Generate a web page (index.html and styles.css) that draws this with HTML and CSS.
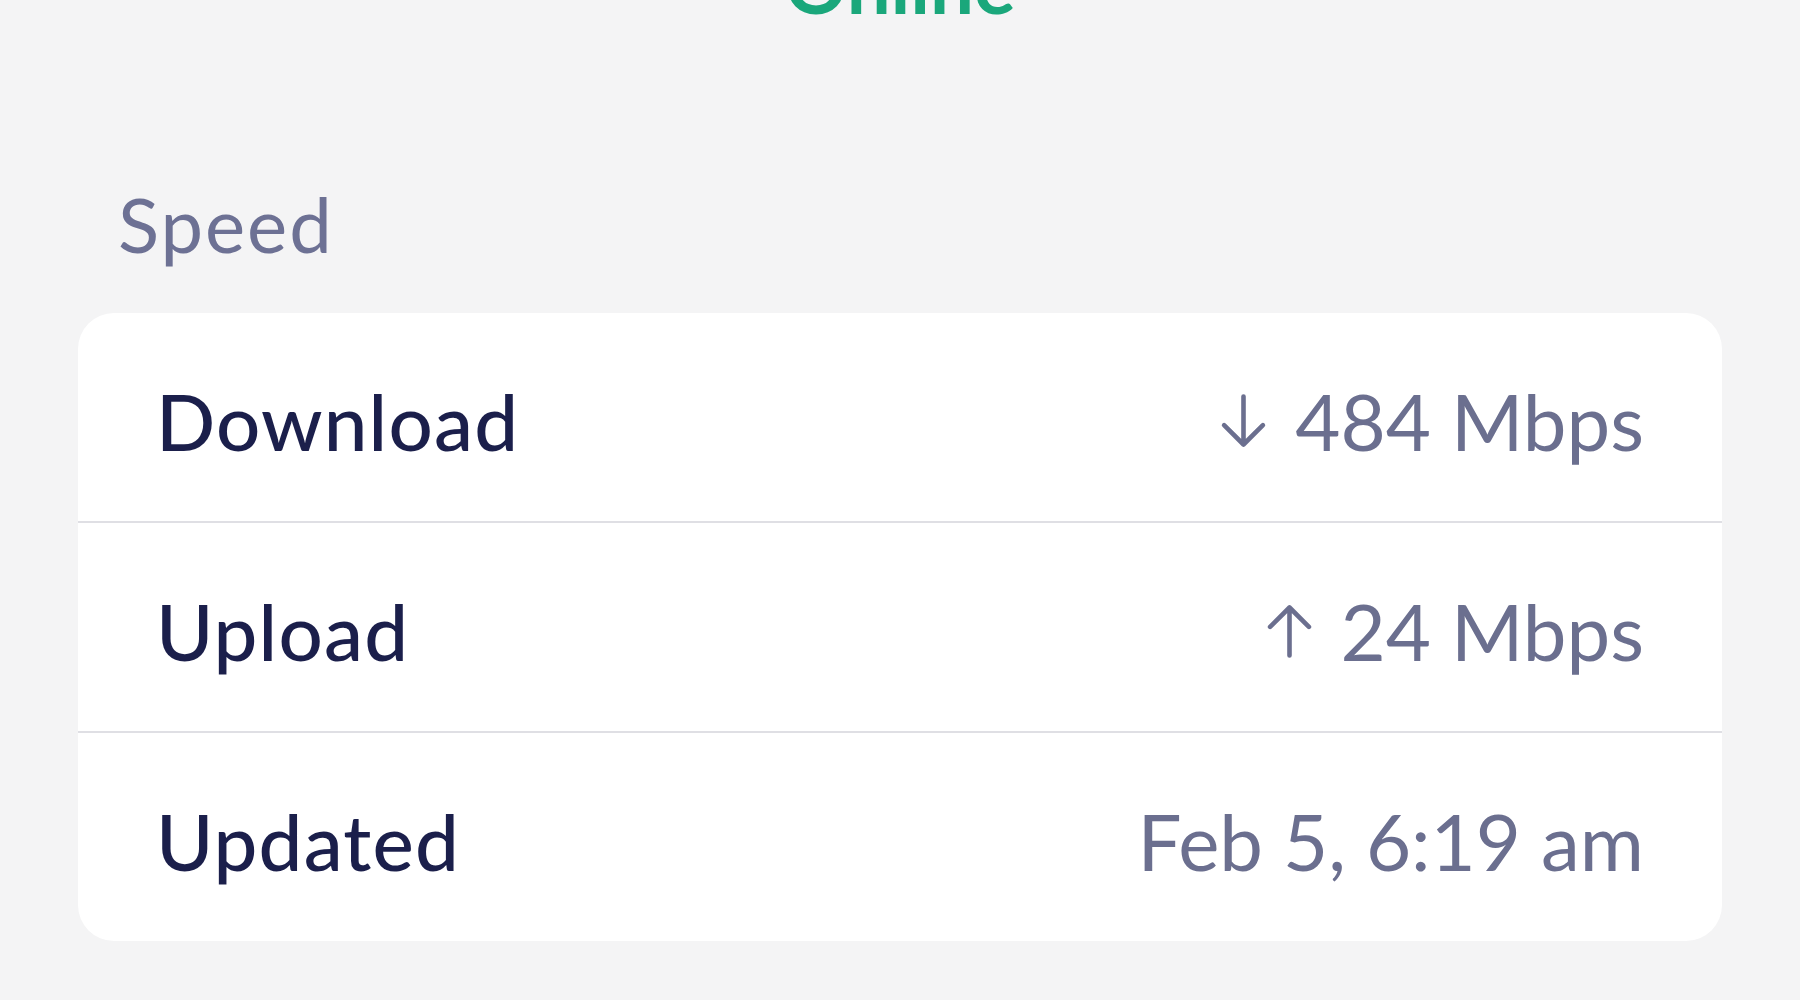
FILE: index.html
```html
<html>
    <head>
        <title>Speed</title>
        <link rel="stylesheet" href="styles.css">
    </head>
    <body>
        <div class="status">Online</div>

        <section class="group">
            <h2 class="group-title">Speed</h2>
            <ul class="card">
                <li class="row">
                    <span class="label">Download</span>
                    <span class="value">
                        <svg class="arrow" viewBox="0 0 46 54"><path d="M23 3 V50 M4 31 L23 50 L42 31"/></svg>
                        484 Mbps
                    </span>
                </li>
                <li class="row">
                    <span class="label">Upload</span>
                    <span class="value">
                        <svg class="arrow" viewBox="0 0 46 54"><path d="M23 51 V4 M4 23 L23 4 L42 23"/></svg>
                        24 Mbps
                    </span>
                </li>
                <li class="row">
                    <span class="label">Updated</span>
                    <span class="value">Feb 5, 6:19 am</span>
                </li>
            </ul>
        </section>
    </body>
</html>
```

FILE: styles.css
```css
*{
    margin:0;
    padding:0;
    box-sizing:border-box;
}
ul,li{
    list-style:none;
}
body{
    background:#f4f4f5;
    font-family:Lato, "Noto Sans", sans-serif;
    height:1000px;
    overflow:hidden;
}
.status{
    margin-top:-55px;
    text-align:center;
    font-size:78px;
    line-height:78px;
    font-weight:700;
    color:#1aa77b;
}
.group{
    padding:0 78px;
}
.group-title{
    margin-top:156px;
    padding-left:40px;
    font-size:76px;
    line-height:90px;
    font-weight:400;
    letter-spacing:2px;
    color:#6d7194;
}
.card{
    margin-top:44px;
    background:#fff;
    border-radius:36px;
    overflow:hidden;
}
.row{
    display:flex;
    align-items:center;
    justify-content:space-between;
    height:210px;
    padding:8px 78px 0 78px;
    border-bottom:2px solid #dfdfe4;
}
.row:last-child{
    height:208px;
    border-bottom:none;
}
.label{
    font-size:78px;
    font-weight:500;
    letter-spacing:1.2px;
    color:#1b1f4b;
}
.value{
    display:flex;
    align-items:center;
    gap:28px;
    font-size:78px;
    color:#6b6f8f;
}
.arrow{
    width:47px;
    height:56px;
    fill:none;
    stroke:#6b6f8f;
    stroke-width:4.5;
    stroke-linecap:round;
    stroke-linejoin:round;
}
```
